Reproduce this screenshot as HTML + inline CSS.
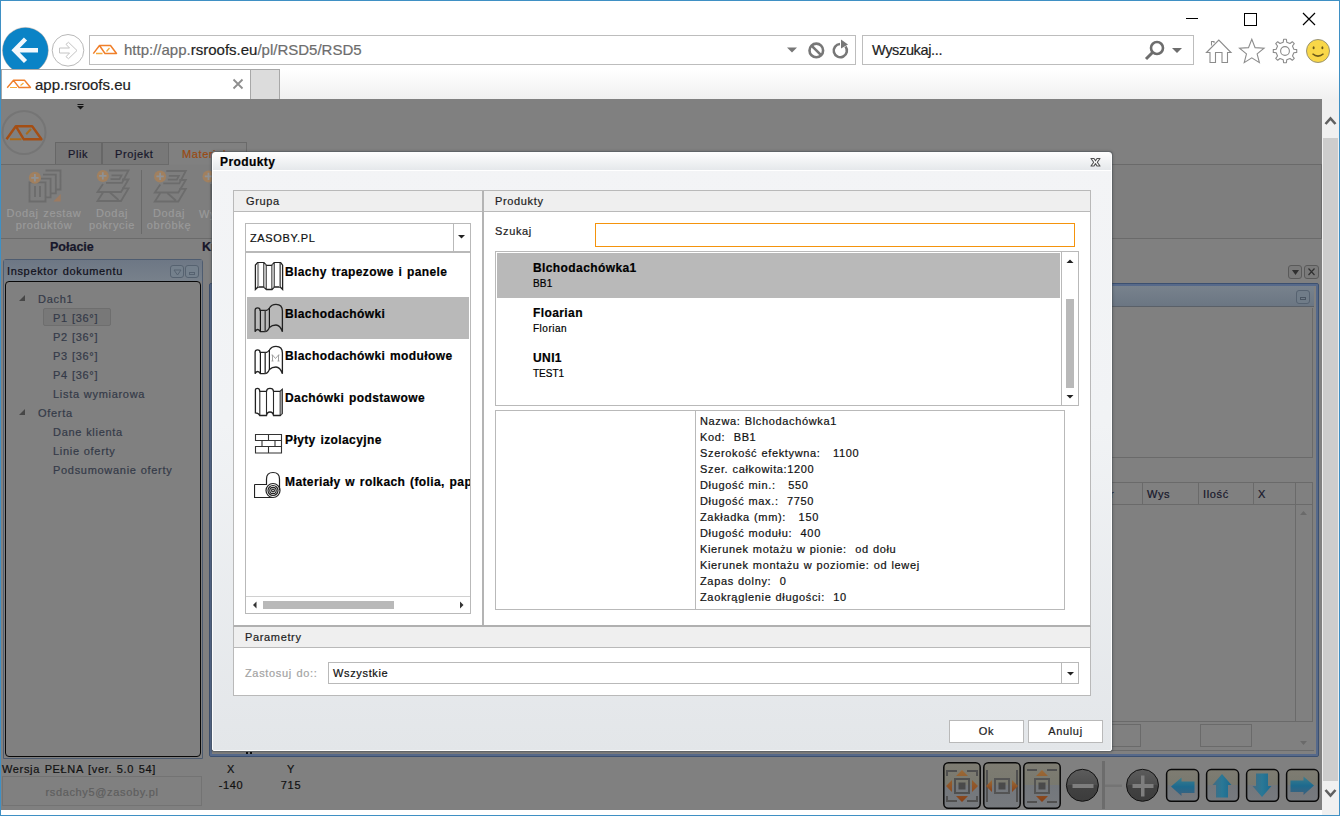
<!DOCTYPE html>
<html><head><meta charset="utf-8">
<style>
*{box-sizing:border-box}
html,body{margin:0;padding:0;width:1340px;height:816px;overflow:hidden;background:#fff;font-family:"Liberation Sans",sans-serif;color:#000}
.a{position:absolute}
.t{position:absolute;white-space:nowrap;line-height:1}
.t,#det{-webkit-text-stroke:0.2px currentColor}
.nb{-webkit-text-stroke:0}
</style></head><body>
<div class="a" style="left:0;top:0;width:1340px;height:816px;border:1px solid #3f90c4;background:#fff"></div>

<!-- ========== BROWSER CHROME ========== -->
<!-- window controls -->
<div class="a" style="left:1186px;top:18px;width:12px;height:1px;background:#000"></div>
<div class="a" style="left:1244px;top:13px;width:13px;height:13px;border:1px solid #000"></div>
<svg class="a" style="left:1302px;top:12px" width="14" height="14"><path d="M1 1L13 13M13 1L1 13" stroke="#000" stroke-width="1.2"/></svg>

<!-- back / forward -->
<svg class="a" style="left:0;top:24px" width="90" height="46">
 <circle cx="25.4" cy="26.3" r="22.9" fill="#0a83c6" stroke="#b59a8a" stroke-width="0.4"/>
 <path d="M16 26.3H38M25.5 15L14.5 26.3L25.5 37.5" stroke="#f3f8fc" stroke-width="4.4" fill="none" stroke-linejoin="miter"/>
 <circle cx="68" cy="26.3" r="15.8" fill="none" stroke="#b9b9b9" stroke-width="1"/>
 <path d="M59.5 24H69.5L66 20.3L68.5 18.3L77 26.5L68.5 34.7L66 32.7L69.5 29H59.5Z" stroke="#c4c4c4" stroke-width="1" fill="none" stroke-linejoin="round"/>
</svg>
<!-- white bar covering circle bottom (tab line) -->

<!-- address bar -->
<div class="a" style="left:89px;top:35px;width:767px;height:30px;border:1px solid #bdbdbd;background:#fff"></div>
<svg class="a" style="left:90px;top:38px" width="30" height="20"><path d="M3.3 15.6L9.5 7.5H20.5L26.5 15.5H15L9.5 7.5" stroke="#f07f2a" stroke-width="1.5" fill="none" stroke-linejoin="round"/><path d="M6 15.5H12.5M16.5 13.5L19.5 10" stroke="#f5aa3a" stroke-width="1.3"/></svg>
<div class="t" style="left:124px;top:42px;font-size:15px;color:#6d6d6d">http://app.<span style="color:#1e1e1e">rsroofs.eu</span>/pl/RSD5/RSD5</div>
<svg class="a" style="left:0;top:30px" width="860" height="40">
 <path d="M787 17.5H797L792 22.5Z" fill="#777"/>
 <circle cx="816.3" cy="20.4" r="6.8" stroke="#777" stroke-width="2.6" fill="none"/><path d="M811.5 15.6L821.1 25.2" stroke="#777" stroke-width="2.6"/>
 <path d="M845.5 16.5A6.6 6.6 0 1 1 840 14" stroke="#777" stroke-width="2.6" fill="none"/><path d="M841 9.5L848 14.5L841 18.5Z" fill="#777"/>
</svg>

<!-- search box -->
<div class="a" style="left:862px;top:35px;width:332px;height:30px;border:1px solid #bdbdbd;background:#fff"></div>
<div class="t" style="left:872px;top:43px;font-size:14.5px;letter-spacing:-0.35px;color:#1e1e1e">Wyszukaj...</div>
<svg class="a" style="left:1140px;top:38px" width="46" height="24">
 <circle cx="17" cy="10" r="6" stroke="#6d6d6d" stroke-width="2.6" fill="none"/><path d="M13 14L6 21" stroke="#6d6d6d" stroke-width="3"/>
 <path d="M32 10H42L37 15Z" fill="#6d6d6d"/>
</svg>

<!-- toolbar icons -->
<svg class="a" style="left:0;top:0" width="1340" height="70">
 <g fill="none" stroke="#8c8c8c" stroke-width="1.1" stroke-linejoin="miter">
  <path d="M1206.5 52.5L1218.8 40L1231 52.5H1227.5V62.5H1222V52.5H1215.5V62.5H1210V52.5Z"/>
  <path d="M1211.5 45.5V41.5H1214V43"/>
  <path d="M1251.80 39.30 L1255.09 47.67 L1264.07 48.21 L1257.13 53.93 L1259.38 62.64 L1251.80 57.80 L1244.22 62.64 L1246.47 53.93 L1239.53 48.21 L1248.51 47.67Z"/>
  <path d="M1283.24 42.17 L1283.61 39.28 L1286.39 39.28 L1286.76 42.17 L1290.00 43.52 L1292.31 41.73 L1294.27 43.69 L1292.48 46.00 L1293.83 49.24 L1296.72 49.61 L1296.72 52.39 L1293.83 52.76 L1292.48 56.00 L1294.27 58.31 L1292.31 60.27 L1290.00 58.48 L1286.76 59.83 L1286.39 62.72 L1283.61 62.72 L1283.24 59.83 L1280.00 58.48 L1277.69 60.27 L1275.73 58.31 L1277.52 56.00 L1276.17 52.76 L1273.28 52.39 L1273.28 49.61 L1276.17 49.24 L1277.52 46.00 L1275.73 43.69 L1277.69 41.73 L1280.00 43.52Z" stroke-linejoin="round"/>
  <circle cx="1285" cy="51" r="4.4"/>
 </g>
 <circle cx="1318" cy="51" r="11.5" fill="#f9d748" stroke="#8e8a70" stroke-width="0.9"/>
 <ellipse cx="1313.6" cy="47.7" rx="1" ry="1.5" fill="#6b5a1a"/><ellipse cx="1322.4" cy="47.7" rx="1" ry="1.5" fill="#6b5a1a"/>
 <path d="M1312.5 53.8Q1318 58.5 1323.5 53.8" stroke="#6b5a1a" stroke-width="1.5" fill="none"/>
</svg>

<!-- tab strip -->
<div class="a" style="left:1px;top:69px;width:1338px;height:30px;background:linear-gradient(#fff,#f0f0f0)"></div>
<div class="a" style="left:1px;top:69px;width:250px;height:30px;background:#fff;border-top:1px solid #a8a8a8;border-left:1px solid #a8a8a8;border-right:1px solid #a8a8a8"></div>
<div class="a" style="left:250px;top:69px;width:30px;height:30px;background:#dcdcdc;border:1px solid #a8a8a8;border-bottom:0"></div>
<svg class="a" style="left:6px;top:77px" width="30" height="16"><path d="M1.2 10.7L7.5 3.3H18.5L24.5 10.5H13L7.5 3.3" stroke="#f07f2a" stroke-width="1.4" fill="none" stroke-linejoin="round"/><path d="M4 10.5H11M14.5 8.5L17.5 6" stroke="#f5aa3a" stroke-width="1.2"/></svg>
<div class="t" style="left:35px;top:77px;font-size:15px;color:#1e1e1e">app.rsroofs.eu</div>
<svg class="a" style="left:232px;top:78px" width="12" height="12"><path d="M1.5 1.5L10.5 10.5M10.5 1.5L1.5 10.5" stroke="#8e8e8e" stroke-width="1.8"/></svg>

<!-- ========== APP (dimmed) ========== -->
<div class="a" id="app" style="left:1px;top:99px;width:1321px;height:711px;background:#808080;overflow:hidden">
 <!-- quick access arrow -->
 <svg class="a" style="left:75px;top:4px" width="10" height="8"><path d="M1.5 1.5H7.5" stroke="#151515" stroke-width="1"/><path d="M1 3H8L4.5 6.5Z" fill="#151515"/></svg>
 <!-- logo circle -->
 <svg class="a" style="left:0;top:10px" width="50" height="48">
  <circle cx="23" cy="23.5" r="21.5" fill="#808080" stroke="#757575" stroke-width="2"/>
  <path d="M5.5 30.3L14.8 17.2H31.2L40.5 30.3H22.8L14.8 17.2" stroke="#a44e14" stroke-width="2.4" fill="none" stroke-linejoin="round"/>
  <path d="M9 30.2H20.5M25.2 25.2L30 20" stroke="#a86a1c" stroke-width="2"/>
 </svg>
 <!-- ribbon tabs -->
 <div class="a" style="left:54px;top:43px;width:47px;height:23px;background:#787878;border:1px solid #676767;border-bottom:0"></div>
 <div class="t" style="left:67px;top:50px;font-size:11px;letter-spacing:0.6px;color:#17172a">Plik</div>
 <div class="a" style="left:101px;top:43px;width:67px;height:23px;background:#787878;border:1px solid #676767;border-bottom:0"></div>
 <div class="t" style="left:114px;top:50px;font-size:11px;letter-spacing:0.6px;color:#17172a">Projekt</div>
 <div class="a" style="left:167px;top:43px;width:79px;height:23px;background:#808080;border:1px solid #6a6a6a;border-bottom:0"></div>
 <div class="t" style="left:181px;top:50px;font-size:11px;letter-spacing:0.6px;color:#9a4a12">Materiał</div>
 <!-- ribbon body -->
 <div class="a" style="left:0;top:65px;width:1321px;height:75px;background:#7e7e7e;border-top:1px solid #6a6a6a;border-bottom:1px solid #6a6a6a;border-right:1px solid #6a6a6a"></div>
 <div class="a" style="left:168px;top:65px;width:77px;height:1px;background:#7f7f7f"></div>
 <div class="a" style="left:140px;top:71px;width:1px;height:64px;background:#6a6a6a"></div>
 <!-- ribbon icons -->
 <svg class="a" style="left:-1px;top:-99px" width="260" height="260">
  <g fill="none" stroke="#6c6c6c" stroke-width="1.8">
   <path d="M45.5 170.5H60.5V189.5H56M43 174.6H55.8V193.4H51M41 178.7H50.6V197.4H46M29.5 182.4H45.5V201.5H29.5Z"/>
   <path d="M35 186V197M40 186V197"/>
  </g>
  <path d="M53.3 201.5H60.7V193.9Z" fill="#9c7b62"/>
  <g id="lay" fill="none" stroke="#6c6c6c" stroke-width="1.8">
   <path d="M109 170.5H128.5L122 182.9H106M111.5 175.3H121.5L119.5 179.2H110.5"/>
   <path d="M122 179.5H128.5L121 192H97.5L103 184"/>
   <path d="M122 188.4H128.5L121 201H97.5L103 192.5M110 192.5L118.5 200"/>
  </g>
  <g transform="translate(57.3,0.5)" fill="none" stroke="#6c6c6c" stroke-width="1.8">
   <path d="M109 170.5H128.5L122 182.9H106M111.5 175.3H121.5L119.5 179.2H110.5"/>
   <path d="M122 179.5H128.5L121 192H97.5L103 184"/>
   <path d="M122 188.4H128.5L121 201H97.5L103 192.5M110 192.5L118.5 200"/>
  </g>
  <circle cx="34.9" cy="177.8" r="6" fill="#a1805f"/><path d="M31.2 177.8H38.6M34.9 174.1V181.5" stroke="#8f9296" stroke-width="1.8"/>
  <circle cx="102.8" cy="175.9" r="6" fill="#a1805f"/><path d="M99.1 175.9H106.5M102.8 172.2V179.6" stroke="#8f9296" stroke-width="1.8"/>
  <circle cx="160.1" cy="176.4" r="6" fill="#a1805f"/><path d="M156.4 176.4H163.8M160.1 172.7V180.1" stroke="#8f9296" stroke-width="1.8"/>
  <circle cx="208.5" cy="176.4" r="6" fill="#a1805f"/><path d="M204.8 176.4H212.2M208.5 172.7V180.1" stroke="#8f9296" stroke-width="1.8"/>
  <path d="M211 184V200" stroke="#6c6c6c" stroke-width="1.8"/>
  <path d="M5.8 230.2V231" stroke="none"/>
 </svg>
 <div class="t" style="left:-2px;top:109px;font-size:11px;letter-spacing:0.65px;word-spacing:1px;color:#9a9a9a;text-align:center;width:90px;line-height:11.5px">Dodaj zestaw<br>produktów</div>
 <div class="t" style="left:76px;top:109px;font-size:11px;letter-spacing:0.65px;word-spacing:1px;color:#9a9a9a;text-align:center;width:70px;line-height:11.5px">Dodaj<br>pokrycie</div>
 <div class="t" style="left:133px;top:109px;font-size:11px;letter-spacing:0.65px;word-spacing:1px;color:#9a9a9a;text-align:center;width:70px;line-height:11.5px">Dodaj<br>obróbkę</div>
 <div class="t" style="left:198px;top:110px;font-size:11px;letter-spacing:0.65px;word-spacing:1px;color:#9a9a9a">Wy</div>
 <!-- section labels -->
 <div class="t" style="left:49px;top:142px;font-size:12.5px;font-weight:bold;color:#17172a">Połacie</div>
 <div class="t" style="left:201px;top:142px;font-size:12.5px;font-weight:bold;color:#17172a">Kr</div>
 <!-- inspector panel -->
 <div class="a" style="left:2px;top:160px;width:200px;height:500px;background:#808080;border:1px solid #4e5c70;border-radius:3px 3px 0 0"></div>
 <div class="a" style="left:3px;top:161px;width:198px;height:21px;background:linear-gradient(#6d7785,#78818b)"></div>
 <div class="t" style="left:6px;top:167px;font-size:11px;letter-spacing:0.65px;word-spacing:1px;color:#0f0f1a">Inspektor dokumentu</div>
 <div class="a" style="left:169px;top:166px;width:14px;height:13px;border:1px solid #566270;border-radius:3px;background:#74808c"></div>
 <svg class="a" style="left:172px;top:170px" width="9" height="7"><path d="M1 1H8L4.5 6Z" fill="none" stroke="#566270" stroke-width="1"/></svg>
 <div class="a" style="left:184px;top:166px;width:14px;height:13px;border:1px solid #566270;border-radius:3px;background:#74808c"></div>
 <div class="a" style="left:188px;top:173px;width:6px;height:3px;border:1px solid #566270"></div>
 <div class="a" style="left:4px;top:182px;width:196px;height:476px;background:#808080;border:1.5px solid #080808;border-radius:4px"></div>
 <!-- tree -->
 <svg class="a" style="left:17px;top:195px" width="8" height="8"><path d="M7 1V7H1Z" fill="#474747"/></svg>
 <div class="t" style="left:37px;top:195px;font-size:11px;letter-spacing:0.7px;word-spacing:0.3px;color:#343a48">Dach1</div>
 <div class="a" style="left:42px;top:209px;width:68px;height:18px;background:#787878;border:1px solid #6e6e6e;border-radius:2px"></div>
 <div class="t" style="left:52px;top:214px;font-size:11px;letter-spacing:0.7px;word-spacing:0.3px;color:#343a48">P1 [36°]</div>
 <div class="t" style="left:52px;top:233px;font-size:11px;letter-spacing:0.7px;word-spacing:0.3px;color:#343a48">P2 [36°]</div>
 <div class="t" style="left:52px;top:252px;font-size:11px;letter-spacing:0.7px;word-spacing:0.3px;color:#343a48">P3 [36°]</div>
 <div class="t" style="left:52px;top:271px;font-size:11px;letter-spacing:0.7px;word-spacing:0.3px;color:#343a48">P4 [36°]</div>
 <div class="t" style="left:52px;top:290px;font-size:11px;letter-spacing:0.7px;word-spacing:0.3px;color:#343a48">Lista wymiarowa</div>
 <svg class="a" style="left:17px;top:309px" width="8" height="8"><path d="M7 1V7H1Z" fill="#474747"/></svg>
 <div class="t" style="left:37px;top:309px;font-size:11px;letter-spacing:0.7px;word-spacing:0.3px;color:#343a48">Oferta</div>
 <div class="t" style="left:52px;top:328px;font-size:11px;letter-spacing:0.7px;word-spacing:0.3px;color:#343a48">Dane klienta</div>
 <div class="t" style="left:52px;top:347px;font-size:11px;letter-spacing:0.7px;word-spacing:0.3px;color:#343a48">Linie oferty</div>
 <div class="t" style="left:52px;top:366px;font-size:11px;letter-spacing:0.7px;word-spacing:0.3px;color:#343a48">Podsumowanie oferty</div>
 <!-- footer -->
 <div class="t" style="left:1px;top:665px;font-size:11px;letter-spacing:0.65px;word-spacing:1px;color:#111">Wersja PEŁNA [ver. 5.0 54]</div>
 <div class="a" style="left:1px;top:677px;width:200px;height:30px;border:1px solid #737373"></div>
 <div class="t" style="left:1px;top:688px;width:200px;text-align:center;font-size:11px;letter-spacing:0.65px;word-spacing:1px;color:#5e5e5e">rsdachy5@zasoby.pl</div>
 <div class="t" style="left:210px;top:665px;width:40px;text-align:center;font-size:11px;letter-spacing:0.65px;word-spacing:1px;color:#111">X</div>
 <div class="t" style="left:270px;top:665px;width:40px;text-align:center;font-size:11px;letter-spacing:0.65px;word-spacing:1px;color:#111">Y</div>
 <div class="t" style="left:210px;top:681px;width:40px;text-align:center;font-size:11px;letter-spacing:0.65px;word-spacing:1px;color:#111">-140</div>
 <div class="t" style="left:270px;top:681px;width:40px;text-align:center;font-size:11px;letter-spacing:0.65px;word-spacing:1px;color:#111">715</div>
 <!-- right panel -->
 <div class="a" style="left:1287px;top:166px;width:14px;height:14px;border:1px solid #5a5a5a;border-radius:3px;background:#7a7a7a"></div>
 <svg class="a" style="left:1290px;top:170px" width="9" height="7"><path d="M1 1H8L4.5 6Z" fill="#303030"/></svg>
 <div class="a" style="left:1303px;top:166px;width:15px;height:14px;border:1px solid #5a5a5a;border-radius:3px;background:#7a7a7a"></div>
 <svg class="a" style="left:1305px;top:168px" width="11" height="10"><path d="M2.5 1.5L8.5 8M8.5 1.5L2.5 8" stroke="#303030" stroke-width="1.2"/></svg>
 <div class="a" style="left:208px;top:184px;width:1110px;height:474px;border:1px solid #3c5070;box-shadow:inset 0 0 0 2px #56698a;border-radius:2px"></div>
 <div class="a" style="left:211px;top:187px;width:1102px;height:21px;background:linear-gradient(#78828d,#6b7683);border-bottom:1px solid #5a6068"></div>
 <div class="a" style="left:1295px;top:191px;width:14px;height:14px;border:1px solid #566270;border-radius:3px;background:#707c88"></div>
 <div class="a" style="left:1299px;top:198px;width:6px;height:3px;border:1px solid #4a5562"></div>
 <div class="a" style="left:211px;top:209px;width:1101px;height:150px;border-right:1px solid #6a6a6a;border-bottom:1px solid #6a6a6a"></div>
 <!-- table -->
 <div class="a" style="left:211px;top:383px;width:1101px;height:240px;border:1px solid #6a6a6a;border-left:0"></div>
 <div class="a" style="left:211px;top:383px;width:1101px;height:23px;border-bottom:1px solid #6a6a6a"></div>
 <div class="a" style="left:1141px;top:383px;width:1px;height:23px;background:#6a6a6a"></div>
 <div class="a" style="left:1197px;top:383px;width:1px;height:23px;background:#6a6a6a"></div>
 <div class="a" style="left:1252px;top:383px;width:1px;height:23px;background:#6a6a6a"></div>
 <div class="a" style="left:1294px;top:383px;width:1px;height:240px;background:#6a6a6a"></div>
 <div class="t" style="left:1109px;top:390px;font-size:11px;letter-spacing:0.65px;word-spacing:1px;color:#17172a">r</div>
 <div class="t" style="left:1146px;top:390px;font-size:11px;letter-spacing:0.65px;word-spacing:1px;color:#17172a">Wys</div>
 <div class="t" style="left:1202px;top:390px;font-size:11px;letter-spacing:0.65px;word-spacing:1px;color:#17172a">Ilość</div>
 <div class="t" style="left:1257px;top:390px;font-size:11px;letter-spacing:0.65px;word-spacing:1px;color:#17172a">X</div>
 <svg class="a" style="left:1298px;top:411px" width="9" height="6"><path d="M1 5H8L4.5 1Z" fill="#6a6a6a"/></svg>
 <div class="a" style="left:211px;top:622px;width:1084px;height:1px;background:#6a6a6a"></div>
 <div class="a" style="left:1100px;top:625px;width:40px;height:23px;border:1px solid #6a6a6a"></div>
 <div class="a" style="left:1199px;top:625px;width:52px;height:23px;border:1px solid #6a6a6a"></div>
 <svg class="a" style="left:1298px;top:641px" width="9" height="6"><path d="M1 1H8L4.5 5Z" fill="#6a6a6a"/></svg>
 <div class="a" style="left:211px;top:651px;width:1102px;height:1px;background:#6a6a6a"></div>
 <!-- bottom toolbar -->
 <svg class="a" style="left:-1px;top:-99px" width="1330" height="820">
  <defs>
   <linearGradient id="bg" x1="0" y1="0" x2="0" y2="1"><stop offset="0" stop-color="#7e7c72"/><stop offset="0.5" stop-color="#79796f"/><stop offset="0.5" stop-color="#73777c"/><stop offset="1" stop-color="#777a7e"/></linearGradient>
   <linearGradient id="cg" x1="0" y1="0" x2="0" y2="1"><stop offset="0" stop-color="#5c5c5c"/><stop offset="0.5" stop-color="#4e4e4e"/><stop offset="0.5" stop-color="#424242"/><stop offset="1" stop-color="#3c3c3c"/></linearGradient>
   <linearGradient id="og" x1="0" y1="0" x2="0" y2="1"><stop offset="0" stop-color="#9a6a38"/><stop offset="1" stop-color="#86421a"/></linearGradient>
   <linearGradient id="ab" x1="0" y1="0" x2="0" y2="1"><stop offset="0" stop-color="#3b7e8e"/><stop offset="0.5" stop-color="#1d6a8e"/><stop offset="1" stop-color="#3f607c"/></linearGradient>
   <linearGradient id="abh" x1="0" y1="0" x2="1" y2="0"><stop offset="0" stop-color="#456a80"/><stop offset="0.5" stop-color="#2a7896"/><stop offset="1" stop-color="#1a6a90"/></linearGradient>
  </defs>
  <!-- b1 -->
  <rect x="943.8" y="762.8" width="36.4" height="45.4" rx="4.5" fill="url(#bg)" stroke="#0a0a0a" stroke-width="1.5"/>
  <g fill="none" stroke="#505050" stroke-width="2">
   <path d="M947 776V771H957M967 771H977V776M947 796V801H957M967 801H977V796"/>
   <rect x="955" y="779" width="14" height="14" stroke-width="2"/>
  </g>
  <rect x="958.5" y="782.5" width="7" height="7" fill="#4a4a4a"/>
  <path d="M956 776H968L962 770ZM956 796H968L962 802ZM952 780V792L946 786ZM972 780V792L978 786Z" fill="url(#og)"/>
  <!-- b2 -->
  <rect x="983.8" y="762.8" width="36.4" height="45.4" rx="4.5" fill="url(#bg)" stroke="#0a0a0a" stroke-width="1.5"/>
  <path d="M987 770V802M1017 770V802" stroke="#505050" stroke-width="2"/>
  <rect x="995" y="779" width="14" height="14" fill="none" stroke="#545454" stroke-width="2"/>
  <rect x="998.5" y="782.5" width="7" height="7" fill="#4a4a4a"/>
  <path d="M992 780V792L986 786ZM1012 780V792L1018 786Z" fill="url(#og)"/>
  <!-- b3 -->
  <rect x="1023.8" y="762.8" width="36.4" height="45.4" rx="4.5" fill="url(#bg)" stroke="#0a0a0a" stroke-width="1.5"/>
  <path d="M1027 770H1037M1047 770H1057M1027 802H1037M1047 802H1057" stroke="#505050" stroke-width="2"/>
  <rect x="1035" y="779" width="14" height="14" fill="none" stroke="#545454" stroke-width="2"/>
  <rect x="1038.5" y="782.5" width="7" height="7" fill="#4a4a4a"/>
  <path d="M1036 776H1048L1042 770ZM1036 796H1048L1042 802Z" fill="url(#og)"/>
  <!-- minus / plus -->
  <circle cx="1082.4" cy="785.3" r="16" fill="url(#cg)" stroke="#111" stroke-width="1"/>
  <rect x="1072.5" y="784" width="21" height="4" fill="#7e7e7e"/>
  <rect x="1102" y="761" width="3" height="48" fill="#6c6c6c"/>
  <rect x="1105" y="784.5" width="17" height="2.5" fill="#747474"/>
  <circle cx="1142.5" cy="785.3" r="16" fill="url(#cg)" stroke="#111" stroke-width="1"/>
  <rect x="1132.5" y="784" width="21" height="4" fill="#7e7e7e"/><rect x="1141" y="775.5" width="3.5" height="21" fill="#7e7e7e"/>
  <!-- arrows -->
  <rect x="1166.6" y="769.6" width="32" height="31.6" rx="4.5" fill="url(#bg)" stroke="#0a0a0a" stroke-width="1.5"/>
  <path d="M1171 786.5L1181.5 777.5V781.5H1194.5V793H1181.5V796Z" fill="url(#ab)"/>
  <rect x="1206.6" y="769.6" width="32" height="31.6" rx="4.5" fill="url(#bg)" stroke="#0a0a0a" stroke-width="1.5"/>
  <path d="M1222 774L1231.5 785H1228V797.5H1216V785H1212.5Z" fill="url(#abh)"/>
  <rect x="1246.6" y="769.6" width="32" height="31.6" rx="4.5" fill="url(#bg)" stroke="#0a0a0a" stroke-width="1.5"/>
  <path d="M1262 797L1271.5 786H1268V773.5H1256V786H1252.5Z" fill="url(#abh)"/>
  <rect x="1286.6" y="769.6" width="32" height="31.6" rx="4.5" fill="url(#bg)" stroke="#0a0a0a" stroke-width="1.5"/>
  <path d="M1314 785.5L1303.5 776.5V780.5H1290.5V792H1303.5V795Z" fill="url(#ab)"/>
 </svg>
 <div class="a" style="left:245px;top:653px;width:2px;height:2px;background:#111"></div>
 <div class="a" style="left:249px;top:653px;width:2px;height:2px;background:#111"></div>
</div>
<!-- page scrollbar -->
<div class="a" style="left:1322px;top:99px;width:17px;height:716px;background:#f0f0f0"></div>
<div class="a" style="left:1323px;top:138px;width:15px;height:643px;background:#cdcdcd"></div>
<svg class="a" style="left:1322px;top:112px" width="17" height="16"><path d="M3.5 12L8.5 6.5L13.5 12" stroke="#606060" stroke-width="2.6" fill="none"/></svg>
<svg class="a" style="left:1322px;top:786px" width="17" height="16"><path d="M3.5 4L8.5 9.5L13.5 4" stroke="#606060" stroke-width="2.6" fill="none"/></svg>

<!-- ========== DIALOG ========== -->
<div class="a" id="dlg" style="left:212px;top:152px;width:900px;height:599px;border:1px solid #fdfdfd;border-radius:3px 3px 2px 2px;box-shadow:0 0 0 1px rgba(70,80,90,0.35),0 0 3px 1px rgba(0,0,0,0.2);background:linear-gradient(#f3f4f6 0%,#f1f3f5 45%,#e3e6e9 100%);overflow:hidden;font-size:12px;letter-spacing:0.2px">
 <div class="a" style="left:0;top:0;width:898px;height:18px;background:linear-gradient(#fdfdfd,#e5e8eb);border-bottom:1px solid #fff"></div>
 <div class="t" style="left:7px;top:3px;font-size:12px;font-weight:bold;letter-spacing:0.4px;word-spacing:1px;">Produkty</div>
 <svg class="a" style="left:877px;top:4px" width="12" height="11"><path d="M1 1.5H4L5.5 3.8L7 1.5H10L7.3 5.2L10 9H7L5.5 6.6L4 9H1L3.7 5.2Z" fill="#fafafa" stroke="#505050" stroke-width="1.1" stroke-linejoin="round"/></svg>

 <!-- main panel -->
 <div class="a" style="left:20px;top:37px;width:858px;height:437px;background:#fff;border:1px solid #b9b9b9;border-bottom:2px solid #b0b0b0"></div>
 <div class="a" style="left:21px;top:38px;width:856px;height:21px;background:#efefef;border-bottom:1px solid #b9b9b9"></div>
 <div class="a" style="left:269px;top:38px;width:2px;height:434px;background:#b4b4b4"></div>
 <div class="t" style="left:33px;top:42.5px;font-size:11px;letter-spacing:0.65px;word-spacing:1px;color:#222">Grupa</div>
 <div class="t" style="left:282px;top:42.5px;font-size:11px;letter-spacing:0.65px;word-spacing:1px;color:#222">Produkty</div>

 <!-- group combo -->
 <div class="a" style="left:32px;top:70px;width:226px;height:30px;background:#fff;border:1px solid #b9b9b9;border-bottom:2px solid #b9b9b9"></div>
 <div class="a" style="left:240px;top:71px;width:1px;height:28px;background:#b9b9b9"></div>
 <svg class="a" style="left:244px;top:81px" width="10" height="6"><path d="M1 1H8L4.5 4.5Z" fill="#222"/></svg>
 <div class="t" style="left:37px;top:80px;font-size:11px;letter-spacing:0.65px;word-spacing:1px;color:#111">ZASOBY.PL</div>
 <!-- group list -->
 <div class="a" style="left:32px;top:100px;width:226px;height:361px;background:#fff;border:1px solid #b9b9b9;border-top:0"></div>
 <div class="a" style="left:34px;top:144px;width:222px;height:42px;background:#b9b9b9"></div>
 <svg class="a" style="left:41px;top:109px" width="30" height="240" fill="none" stroke="#222" stroke-width="1.1">
  <!-- 1 trapez -->
  <g transform="translate(0,0)">
   <path d="M1.4 27.5V3L3.8 0.4H9.7L12.3 3.3H17.8L20.4 0.4H26.5L28.6 3.2V27.5L26.2 25H20.2L18 27.5H12.5L9.7 25H4Z" stroke-width="1.3"/>
   <path d="M4 0.8V25M9.7 0.8V25M12.3 3.3V27.5M17.8 3.3V27.5M20.3 0.8V25M26.3 0.8V25" stroke="#3a3a3a" stroke-width="1"/>
   <path d="M4.6 1V25M11 2V26M19 2V26M25.6 1V25" stroke="#999" stroke-width="1"/>
  </g>
  <!-- 2 blachodachowki -->
  <g transform="translate(0,42)">
   <path d="M1.1 27.7V6Q1.1 3.8 3.6 3.8Q6.1 3.8 6.1 6.4H12.5Q14 6 15.4 4Q17.5 0.3 22 0.3Q28.4 0.3 28.4 7V27.7Q26 21 22 21Q18 21 15.4 23.5Q13.5 27.7 11 27.7H6.4Q5.5 25.5 3.6 25.5Q1.8 25.5 1.1 27.7Z" stroke-width="1.3"/>
   <path d="M6.4 6.4V27.7M15.4 4V23.5" stroke="#1a1a1a" stroke-width="1.2"/>
   <path d="M11.2 6.4V27.7" stroke="#444" stroke-width="1.5"/>
  </g>
  <!-- 3 modulowe -->
  <g transform="translate(0,84)">
   <path d="M1.1 27.7V6Q1.1 3.8 3.6 3.8Q6.1 3.8 6.1 6.4H12.5Q14 6 15.4 4Q17.5 0.3 22 0.3Q28.4 0.3 28.4 7V27.7Q26 21 22 21Q18 21 15.4 23.5Q13.5 27.7 11 27.7H6.4Q5.5 25.5 3.6 25.5Q1.8 25.5 1.1 27.7Z" stroke-width="1.3"/>
   <path d="M6.4 6.4V27.7M15.4 4V23.5" stroke="#1a1a1a" stroke-width="1.2"/>
   <path d="M11.2 6.4V27.7" stroke="#444" stroke-width="1.5"/>
   <path d="M18.5 15V9L21.5 12.5L24.5 9V15M17.5 15H19.5M23.5 15H25.5M17.5 9H18.8M24.2 9H25.5" stroke="#9a9a9a" stroke-width="0.9"/>
  </g>
  <!-- 4 dachowki podstawowe -->
  <g transform="translate(0,126)">
   <path d="M1.4 24.8V2Q1.4 0.4 3.5 0.4Q5.5 0.4 5.8 3.3H12.5Q12.8 0.4 16 0.4Q19.2 0.4 19.5 3.3H26.2L28.2 1.5V25.5L26.2 27.5H19.5Q19 24 16 24Q13 24 12.5 27.5H5.8Q5 25 1.4 24.8Z" stroke-width="1.3"/>
   <path d="M5.8 3.3V27.5M12.5 3.3V27.5M19.5 3.3V27.5M26.2 3.3V27.5" stroke="#2a2a2a" stroke-width="1.1"/>
   <path d="M27.2 2.5V26.5" stroke="#999" stroke-width="1"/>
  </g>
  <!-- 5 bricks -->
  <g transform="translate(0,172)" stroke="#333">
   <path d="M1.5 0.5H27.5V6.5H1.5ZM14.5 0.5V6.5M1.5 12.5H27.5V19H1.5ZM14.5 12.5V19M8 6.5V12.5M21 6.5V12.5M27.5 6.5V12.5"/>
  </g>
  <!-- 6 roll -->
  <g transform="translate(0,210)" stroke-width="1.2">
   <path d="M12.5 13V7Q12.5 0.5 19 0.5Q25.5 0.5 25.5 7V18"/>
   <path d="M0.5 12.5H13M0.5 12.5V25.5H18.5"/>
   <circle cx="19" cy="18.5" r="7"/><circle cx="19" cy="18.5" r="5"/><circle cx="19" cy="18.5" r="3.2"/><circle cx="19" cy="18.5" r="1.4"/>
  </g>
 </svg>
 <div class="t" style="left:72px;top:113px;font-size:12px;font-weight:bold;letter-spacing:0.4px;word-spacing:1px;">Blachy trapezowe i panele</div>
 <div class="t" style="left:72px;top:155px;font-size:12px;font-weight:bold;letter-spacing:0.4px;word-spacing:1px;">Blachodachówki</div>
 <div class="t" style="left:72px;top:197px;font-size:12px;font-weight:bold;letter-spacing:0.4px;word-spacing:1px;">Blachodachówki modułowe</div>
 <div class="t" style="left:72px;top:239px;font-size:12px;font-weight:bold;letter-spacing:0.4px;word-spacing:1px;">Dachówki podstawowe</div>
 <div class="t" style="left:72px;top:281px;font-size:12px;font-weight:bold;letter-spacing:0.4px;word-spacing:1px;">Płyty izolacyjne</div>
 <div class="a" style="left:72px;top:319px;width:185px;height:20px;overflow:hidden"><div class="t" style="left:0;top:4px;font-size:12px;font-weight:bold;letter-spacing:0.4px;word-spacing:1px;">Materiały w rolkach (folia, papa)</div></div>
 <!-- h scrollbar -->
 <div class="a" style="left:33px;top:443px;width:224px;height:1px;background:#d0d0d0"></div>
 <svg class="a" style="left:39px;top:448px" width="6" height="8"><path d="M4.5 0.5V7.5L1 4Z" fill="#333"/></svg>
 <div class="a" style="left:50px;top:448px;width:131px;height:8px;background:#b9b9b9"></div>
 <svg class="a" style="left:246px;top:448px" width="6" height="8"><path d="M1 0.5V7.5L4.5 4Z" fill="#333"/></svg>

 <!-- search -->
 <div class="t" style="left:282px;top:72.5px;font-size:11px;letter-spacing:0.65px;word-spacing:1px;color:#222">Szukaj</div>
 <div class="a" style="left:382px;top:70px;width:480px;height:24px;background:#fff;border:1px solid #f4930c"></div>
 <!-- product list -->
 <div class="a" style="left:282px;top:98px;width:584px;height:155px;background:#fff;border:1px solid #b9b9b9"></div>
 <div class="a" style="left:284px;top:100px;width:563px;height:45px;background:#b9b9b9"></div>
 <div class="a" style="left:848px;top:99px;width:1px;height:153px;background:#b9b9b9"></div>
 <svg class="a" style="left:852px;top:105px" width="10" height="6"><path d="M1.5 5H8.5L5 1.5Z" fill="#222"/></svg>
 <div class="a" style="left:853px;top:146px;width:8px;height:89px;background:#b9b9b9"></div>
 <svg class="a" style="left:852px;top:241px" width="10" height="6"><path d="M1.5 1H8.5L5 4.5Z" fill="#222"/></svg>
 <div class="t" style="left:320px;top:109px;font-size:12px;font-weight:bold;letter-spacing:0.4px;word-spacing:1px;">Blchodachówka1</div>
 <div class="t" style="left:320px;top:126px;font-size:10px;letter-spacing:0.2px">BB1</div>
 <div class="t" style="left:320px;top:154px;font-size:12px;font-weight:bold;letter-spacing:0.4px;word-spacing:1px;">Floarian</div>
 <div class="t" style="left:320px;top:171px;font-size:10px;letter-spacing:0.5px">Florian</div>
 <div class="t" style="left:320px;top:199px;font-size:12px;font-weight:bold;letter-spacing:0.4px;word-spacing:1px;">UNI1</div>
 <div class="t" style="left:320px;top:216px;font-size:10px;letter-spacing:0px">TEST1</div>
 <!-- details -->
 <div class="a" style="left:282px;top:257px;width:570px;height:200px;background:#fff;border:1px solid #b9b9b9"></div>
 <div class="a" style="left:482px;top:258px;width:1px;height:198px;background:#b9b9b9"></div>
 <div class="a" id="det" style="left:487px;top:260px;font-size:11px;line-height:16px;letter-spacing:0.65px;word-spacing:0.5px;color:#111;white-space:pre">Nazwa: Blchodachówka1
Kod:  BB1
Szerokość efektywna:   1100
Szer. całkowita:1200
Długość min.:   550
Długość max.:  7750
Zakładka (mm):   150
Długość modułu:  400
Kierunek motażu w pionie:  od dołu
Kierunek montażu w poziomie: od lewej
Zapas dolny:  0
Zaokrąglenie długości:  10</div>

 <!-- parametry -->
 <div class="a" style="left:20px;top:474px;width:858px;height:69px;background:#fff;border:1px solid #b9b9b9;border-top:0"></div>
 <div class="a" style="left:21px;top:474px;width:856px;height:21px;background:#efefef;border-bottom:1px solid #b9b9b9"></div>
 <div class="t" style="left:32px;top:478.5px;font-size:11px;letter-spacing:0.65px;word-spacing:1px;color:#222">Parametry</div>
 <div class="t" style="left:32px;top:514.5px;font-size:11px;letter-spacing:0.65px;word-spacing:1px;color:#a3a3a3">Zastosuj do::</div>
 <div class="a" style="left:115px;top:509px;width:751px;height:22px;background:#fff;border:1px solid #b9b9b9"></div>
 <div class="a" style="left:848px;top:510px;width:1px;height:20px;background:#b9b9b9"></div>
 <svg class="a" style="left:853px;top:518px" width="10" height="6"><path d="M1 1H8L4.5 4.5Z" fill="#222"/></svg>
 <div class="t" style="left:120px;top:514.5px;font-size:11px;letter-spacing:0.65px;word-spacing:1px;color:#111">Wszystkie</div>

 <!-- buttons -->
 <div class="a" style="left:736px;top:567px;width:75px;height:23px;background:#fff;border:1px solid #b9b9b9"></div>
 <div class="t" style="left:736px;top:572.5px;width:75px;text-align:center;font-size:11px;letter-spacing:0.65px;word-spacing:1px;color:#222">Ok</div>
 <div class="a" style="left:815px;top:567px;width:75px;height:23px;background:#fff;border:1px solid #b9b9b9"></div>
 <div class="t" style="left:815px;top:572.5px;width:75px;text-align:center;font-size:11px;letter-spacing:0.65px;word-spacing:1px;color:#222">Anuluj</div>
</div>

</body></html>
